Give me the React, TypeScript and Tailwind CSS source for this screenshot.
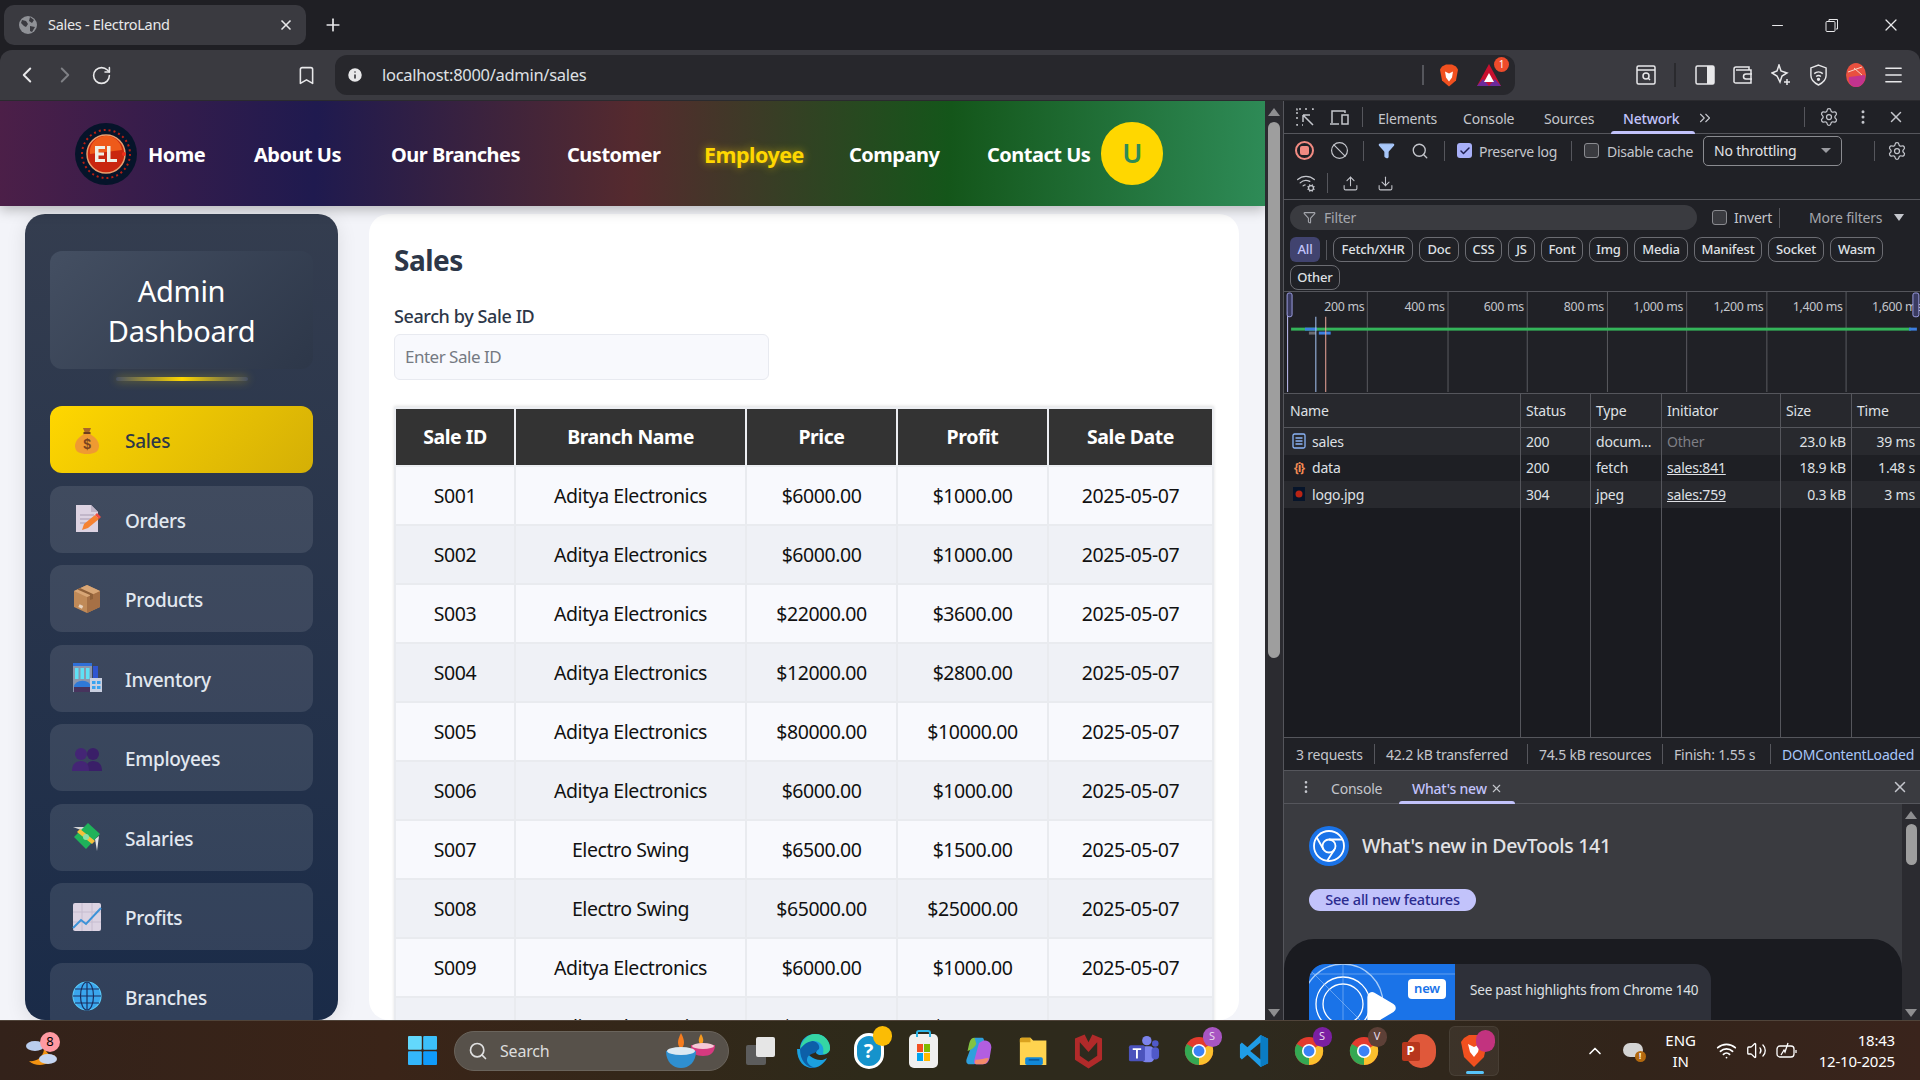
import React from "react";
import { ChevronLeft, ChevronRight, RotateCw, Bookmark, Info, X, Plus, Minus, Search, Settings, MoreVertical, ChevronsRight, Ban, Upload, Download, WifiCog, Filter, ChevronUp, Wifi, Volume2, Check, Menu, Play } from "lucide-react";

const ChromeIcon = ({ badge, color }: { badge: string; color: string }) => (
  <div className="relative w-[34px] h-[36px] flex items-center justify-center">
    <svg viewBox="0 0 32 32" className="w-[30px] h-[32px]">
      <circle cx="16" cy="16" r="15" fill="#e33b2e" />
      <path d="M16 16 L29 8.5 A15 15 0 0 1 16 31 Z" fill="#fbc02d" />
      <path d="M16 16 L16 31 A15 15 0 0 1 3 8.5 Z" fill="#34a853" />
      <circle cx="16" cy="16" r="7.5" fill="#fff" />
      <circle cx="16" cy="16" r="5.8" fill="#3b82f6" />
    </svg>
    <div className={`absolute -top-[6px] -right-[6px] w-[19px] h-[20px] rounded-full flex items-center justify-center text-[11px] ${color} text-[#e9dcef]`}>{badge}</div>
  </div>
);

const Logo = () => (
  <svg viewBox="0 0 62 62" className="w-[62px] h-[62px] shrink-0">
    <circle cx="31" cy="31" r="31" fill="#06142a" />
    <circle cx="31" cy="31" r="24" fill="none" stroke="#b81f12" strokeWidth="2" strokeDasharray="2 3" />
    <circle cx="31" cy="31" r="19" fill="#c9260f" stroke="#e8a070" strokeWidth="1.5" />
    <path d="M15 31a16 16 0 0 1 32 -4z" fill="#ee5a1a" />
    <path d="M20 23h10v3h-6.500v3.500H29v3h-5.500V36H30v3H20z M32 23h3.500v13H42v3H32z" fill="#eef0e6" />
    <circle cx="49" cy="31" r="2" fill="#f0301c" />
  </svg>
);

const Bag = () => (
  <svg viewBox="0 0 30 30" className="w-[30px] h-[30px]">
    <path d="M11 3h8l-2 5h-4z" fill="#a8662a" />
    <rect x="11.5" y="7" width="7" height="2.4" fill="#6d3f1c" />
    <path d="M12 9h6c5 3 9 7 9 12 0 6-5 8-12 8S3 27 3 21c0-5 4-9 9-12z" fill="#ef9a32" />
    <text x="15" y="24" textAnchor="middle" fontSize="14" fontWeight="700" fill="#7a4420" fontFamily="Liberation Sans">$</text>
  </svg>
);
const Doc = () => (
  <svg viewBox="0 0 30 30" className="w-[30px] h-[30px]">
    <path d="M4 1h15l7 7v20H4z" fill="#ddd3e2" />
    <path d="M19 1l7 7h-7z" fill="#c0b5c8" />
    <path d="M8 11h14M8 15h12M8 19h8" stroke="#a69bb0" strokeWidth="1" />
    <path d="M10 26l2-6 11-9 4 4-11 9z" fill="#f58232" />
    <path d="M23 11l2-2 4 4-2 2z" fill="#ef4e43" />
  </svg>
);
const Box = () => (
  <svg viewBox="0 0 30 30" className="w-[30px] h-[30px]">
    <path d="M15 1l13 6v16l-13 6-13-6V7z" fill="#c08a58" />
    <path d="M15 13l13-6v16l-13 6z" fill="#a67045" />
    <path d="M2 7l13 6 13-6-13-6z" fill="#d8a676" />
    <path d="M8 4l13 6v5l-3 1v-5L5.500 5.500z" fill="#8f6039" />
    <rect x="7" y="21" width="4" height="3" fill="#e8d4c0" transform="rotate(25 9 22)" />
  </svg>
);
const Building = () => (
  <svg viewBox="0 0 30 30" className="w-[30px] h-[30px]">
    <rect x="1" y="1" width="19" height="28" fill="#8c96ac" />
    <rect x="1" y="0" width="19" height="3" fill="#2f6fd8" />
    <rect x="3" y="5" width="3.500" height="11" fill="#5fe0f5" />
    <rect x="8.500" y="5" width="3.500" height="11" fill="#5fe0f5" />
    <rect x="14" y="5" width="3.500" height="11" fill="#5fe0f5" />
    <path d="M2 24a8 6 0 0 1 17 0z" fill="#2e79d8" />
    <rect x="2" y="24" width="17" height="5" fill="#47335d" />
    <rect x="21" y="3" width="5" height="13" fill="#2f55d0" />
    <rect x="18" y="15" width="12" height="14" fill="#c9cfe0" />
    <rect x="20" y="18" width="3.500" height="3" fill="#39a3f0" />
    <rect x="25" y="18" width="3.500" height="3" fill="#39a3f0" />
    <rect x="20" y="23" width="3.500" height="3" fill="#39a3f0" />
    <rect x="25" y="23" width="3.500" height="3" fill="#39a3f0" />
  </svg>
);
const Busts = () => (
  <svg viewBox="0 0 30 30" className="w-[30px] h-[30px]">
    <circle cx="21" cy="11" r="6" fill="#3a1f68" />
    <path d="M14 28c0-8 3-10 7-10s9 2 9 10z" fill="#3a1f68" />
    <circle cx="9" cy="11" r="6" fill="#442575" />
    <path d="M0 28c0-8 5-10 9-10s8 2 8 10z" fill="#442575" />
  </svg>
);
const Money = () => (
  <svg viewBox="0 0 30 30" className="w-[30px] h-[30px]">
    <path d="M1 5h13l3 6z" fill="#d4d6d8" />
    <path d="M25 29l-2-12 4-3z" fill="#e4e4e4" />
    <path d="M2 15L16 1l12 11-14 15z" fill="#1fb35a" />
    <path d="M8 7l15 12-3 3L5 10z" fill="#f5c13a" />
    <circle cx="14" cy="15" r="3" fill="#8ce0a8" />
  </svg>
);
const ChartIco = () => (
  <svg viewBox="0 0 30 30" className="w-[30px] h-[30px]">
    <rect x="1" y="1" width="28" height="28" rx="2" fill="#dcd3e2" />
    <path d="M1 10h28M1 20h28M10 1v28M20 1v28" stroke="#c6bccf" strokeWidth="1" />
    <path d="M1 26l8-8 5 4L29 6" stroke="#3d93d8" strokeWidth="2" fill="none" />
  </svg>
);
const GlobeIco = () => (
  <svg viewBox="0 0 30 30" className="w-[30px] h-[30px]" fill="none">
    <circle cx="15" cy="15" r="14" fill="#3aa6ee" />
    <g stroke="#1a2f60" strokeWidth="1.200">
      <circle cx="15" cy="15" r="14" stroke="#58c8f8" />
      <ellipse cx="15" cy="15" rx="6.500" ry="14" />
      <path d="M15 1v28M1 15h28M3 8h24M3 22h24" />
    </g>
  </svg>
);

const navItems = [
  { label: "Sales", icon: <Bag />, active: true },
  { label: "Orders", icon: <Doc /> },
  { label: "Products", icon: <Box /> },
  { label: "Inventory", icon: <Building /> },
  { label: "Employees", icon: <Busts /> },
  { label: "Salaries", icon: <Money /> },
  { label: "Profits", icon: <ChartIco /> },
  { label: "Branches", icon: <GlobeIco /> },
];

const rows = [
  ["S001", "Aditya Electronics", "$6000.00", "$1000.00", "2025-05-07"],
  ["S002", "Aditya Electronics", "$6000.00", "$1000.00", "2025-05-07"],
  ["S003", "Aditya Electronics", "$22000.00", "$3600.00", "2025-05-07"],
  ["S004", "Aditya Electronics", "$12000.00", "$2800.00", "2025-05-07"],
  ["S005", "Aditya Electronics", "$80000.00", "$10000.00", "2025-05-07"],
  ["S006", "Aditya Electronics", "$6000.00", "$1000.00", "2025-05-07"],
  ["S007", "Electro Swing", "$6500.00", "$1500.00", "2025-05-07"],
  ["S008", "Electro Swing", "$65000.00", "$25000.00", "2025-05-07"],
  ["S009", "Aditya Electronics", "$6000.00", "$1000.00", "2025-05-07"],
  ["S010", "Aditya Electronics", "$6000.00", "$1000.00", "2025-05-07"],
];

const chips = [
  ["Fetch/XHR", "w-[80px]"], ["Doc", "w-[40px]"], ["CSS", "w-[37px]"], ["JS", "w-[27px]"], ["Font", "w-[42px]"],
  ["Img", "w-[39px]"], ["Media", "w-[54px]"], ["Manifest", "w-[68px]"], ["Socket", "w-[56px]"], ["Wasm", "w-[53px]"],
];

const Sep = ({ cls = "mx-0" }: { cls?: string }) => <div className={`w-px h-[20px] bg-[#55565c] shrink-0 ${cls}`} />;
const Box14 = () => <div className="w-[15px] h-[15px] rounded-[3px] border border-[#8a8b90] bg-[#3a3b40] shrink-0" />;

const netRows = [
  { ic: <svg viewBox="0 0 14 16" className="w-[14px] h-[16px]" fill="none" stroke="#8ab4f8" strokeWidth="1.300"><rect x="1" y="1" width="12" height="14" rx="1.500" /><path d="M3.500 5h7M3.500 8h7M3.500 11h7" /></svg>, name: "sales", st: "200", ty: "docum...", ini: "Other", size: "23.0 kB", time: "39 ms", bg: "bg-[#28292e]" },
  { ic: <span className="text-[#f28b54] text-[12px] font-bold leading-none tracking-[-1px]">{"{i}"}</span>, name: "data", st: "200", ty: "fetch", ini: "sales:841", size: "18.9 kB", time: "1.48 s", bg: "bg-[#1e1f24]" },
  { ic: <svg viewBox="0 0 12 14" className="w-[12px] h-[14px]"><rect width="12" height="14" fill="#06142a" /><circle cx="6" cy="7" r="3.500" fill="#b82414" /></svg>, name: "logo.jpg", st: "304", ty: "jpeg", ini: "sales:759", size: "0.3 kB", time: "3 ms", bg: "bg-[#28292e]" },
];

const TaskSlot = ({ children }: { children: React.ReactNode }) => <div className="w-[55px] flex justify-center items-center shrink-0">{children}</div>;

export default function App() {
  return (
    <div className="w-[1920px] h-[1080px] flex flex-col overflow-hidden bg-[#202025] font-['Noto_Sans',sans-serif]">
      {/* tab strip */}
      <div className="h-[50px] shrink-0 flex items-center pl-[4px] bg-[#1f1f24] text-[#e8e8ea]">
        <div className="w-[302px] h-[40px] rounded-[10px] bg-[#3a3a40] flex items-center pl-[15px] pr-[12px]">
          <svg viewBox="0 0 18 18" className="w-[18px] h-[18px] shrink-0"><circle cx="9" cy="9" r="9" fill="#8f9196" /><path d="M3 4l4 1 2 3-2 3-2-1-3-3zM11 1l4 3-2 3-3-2zM11 10l5 1-3 5-2-1z" fill="#3a3a40" /></svg>
          <span className="ml-[11px] text-[14.500px] flex-1 tracking-[-0.3px]">Sales - ElectroLand</span>
          <X className="w-[16px] h-[16px]" strokeWidth={2.500} />
        </div>
        <Plus className="w-[20px] h-[20px] ml-[17px]" />
        <div className="flex-1" />
        <Minus className="w-[17px] h-[17px] mr-[39px]" strokeWidth={1.500} />
        <svg viewBox="0 0 14 14" className="w-[14px] h-[14px] mr-[42px]" fill="none" stroke="#e8e8ea"><rect x="1" y="3.500" width="9" height="10" rx="1" /><path d="M4 3V1.500h8.500V11H11" /></svg>
        <X className="w-[20px] h-[20px] mr-[19px]" strokeWidth={1.500} />
      </div>
      {/* toolbar */}
      <div className="h-[51px] shrink-0 bg-[#3a3a40] rounded-t-[12px] flex items-center text-[#e8e8ea] border-b border-[#2a2a2e]">
        <ChevronLeft className="w-[26px] h-[26px] ml-[14px]" strokeWidth={1.800} />
        <ChevronRight className="w-[26px] h-[26px] ml-[12px] text-[#7f8085]" strokeWidth={1.800} />
        <RotateCw className="w-[21px] h-[21px] ml-[13px]" strokeWidth={1.800} />
        <Bookmark className="w-[21px] h-[23px] ml-[184px]" strokeWidth={1.800} />
        <div className="ml-[18px] w-[1180px] h-[40px] rounded-[12px] bg-[#27272c] flex items-center pl-[11px]">
          <Info className="w-[18px] h-[18px] text-[#27272c] fill-[#e8e8ea]" strokeWidth={2} />
          <span className="ml-[18px] text-[16.500px] tracking-[-0.3px] text-[#dfe0e4]">localhost:8000/admin/sales</span>
          <div className="flex-1" />
          <div className="w-[2px] h-[20px] bg-[#55565c]" />
          <svg viewBox="0 0 20 24" className="w-[20px] h-[25px] ml-[15px]"><path d="M3 3l4-2h6l4 2 2 3-2 11-7 6-7-6L1 6z" fill="#f1501f" /><path d="M6 8l4 2 4-2-1 6-3 4-3-4z" fill="#fff" /></svg>
          <div className="relative ml-[18px]">
            <svg viewBox="0 0 24 22" className="w-[24px] h-[22px]"><path d="M12 0l12 22H0z" fill="#c8102e" /><path d="M12 22H0l6-7z" fill="#6b2a9b" /><path d="M24 22H12l6-7z" fill="#6b2a9b" /><path d="M12 9l5 9H7z" fill="#fff" /></svg>
            <div className="absolute -top-[7px] -right-[8px] w-[15px] h-[15px] rounded-full bg-[#ee4b2b] text-[10px] text-white flex items-center justify-center">1</div>
          </div>
          <div className="w-[14px]" />
        </div>
        <div className="w-[121px] shrink-0" />
        <svg viewBox="0 0 20 20" className="w-[20px] h-[20px] shrink-0" fill="none" stroke="#e8e8ea" strokeWidth="1.500"><rect x="1" y="1" width="18" height="18" rx="1.500" /><path d="M1 5h18" /><circle cx="10" cy="11" r="3" /><path d="M12 13l2 2" /></svg>
        <div className="w-[2px] h-[24px] bg-[#2a2a2e] ml-[18px] shrink-0" />
        <svg viewBox="0 0 20 20" className="w-[20px] h-[20px] ml-[19px] shrink-0"><rect x="1" y="1" width="18" height="18" rx="1.500" fill="none" stroke="#e8e8ea" strokeWidth="1.500" /><rect x="12" y="1" width="7" height="18" fill="#e8e8ea" /></svg>
        <svg viewBox="0 0 20 20" className="w-[20px] h-[20px] ml-[18px] shrink-0" fill="none" stroke="#e8e8ea" strokeWidth="1.500"><path d="M1 4a2 2 0 0 1 2-2h13v3M1 4v13a2 2 0 0 0 2 1h15V5H3" /><path d="M19 9h-6a2 2 0 0 0 0 5h6" /></svg>
        <svg viewBox="0 0 20 22" className="w-[20px] h-[22px] ml-[18px] shrink-0" fill="none" stroke="#e8e8ea" strokeWidth="1.500"><path d="M8 1l2 6 6 2-5 3-2 6-3-6-5-3 5-2z" /><path d="M16 15v6M13 18h6" /></svg>
        <svg viewBox="0 0 20 24" className="w-[19px] h-[23px] ml-[18px] shrink-0" fill="none" stroke="#e8e8ea" strokeWidth="1.500"><path d="M10 1l8 3v8c0 5-4 8-8 10-4-2-8-5-8-10V4z" /><path d="M5.500 10a7 7 0 0 1 9 0M7.500 13a4 4 0 0 1 5 0" /><circle cx="10" cy="16" r="1" fill="#e8e8ea" /></svg>
        <svg viewBox="0 0 20 24" className="w-[20px] h-[24px] ml-[18px] shrink-0"><ellipse cx="10" cy="12" rx="10" ry="12" fill="#e8503f" /><path d="M10 24C4 24 2 18 3 14l16-2c1 6-3 12-9 12z" fill="#c2338f" /><path d="M2 9l14-5M8 5l8 7" stroke="#f5d5c8" strokeWidth="1" /></svg>
        <Menu className="w-[23px] h-[26px] ml-[16px] shrink-0" strokeWidth={1.500} />
      </div>
      {/* middle */}
      <div className="flex-1 min-h-0 flex">
        {/* page */}
        <div className="w-[1265px] shrink-0 flex flex-col bg-[#f3f4f9] overflow-hidden">
          <header className="h-[105px] shrink-0 flex items-center pl-[75px] shadow-[0_4px_12px_rgba(0,0,0,0.25)] z-10 bg-[linear-gradient(92deg,#4c1f48,#1f1a4f_25%,#552a2e_50%,#14561a_75%,#2e8b57)] text-white font-bold text-[20px] tracking-[-0.5px]">
            <Logo />
            <div className="ml-[11px] mt-[3px] flex items-center">
              <span className="w-[106px]">Home</span>
              <span className="w-[137px]">About Us</span>
              <span className="w-[176px]">Our Branches</span>
              <span className="w-[137px]">Customer</span>
              <span className="w-[145px] text-[#ffd700] text-[21.500px] [text-shadow:0_0_8px_rgba(255,215,0,0.6)]">Employee</span>
              <span className="w-[138px]">Company</span>
              <span className="w-[114px]">Contact Us</span>
            </div>
            <div className="w-[62px] h-[63px] rounded-full bg-[#ffd700] text-[#2e8b57] text-[27px] flex items-center justify-center font-semibold">U</div>
          </header>
          <div className="flex-1 min-h-0 flex pl-[25px] pr-[26px] pt-[8px] gap-[31px]">
            <aside className="w-[313px] shrink-0 rounded-[20px] overflow-hidden bg-[linear-gradient(180deg,#343d4f,#1a2b48)] px-[25px] pt-[37px] shadow-[0_4px_20px_rgba(0,0,0,0.1)]">
              <div className="h-[118px] pt-[2px] rounded-[12px] bg-[linear-gradient(135deg,#444f62,#2d3749)] flex items-center justify-center text-center text-white text-[29px] leading-[40px] tracking-[-0.3px] px-[40px]">Admin Dashboard</div>
              <div className="mx-auto mt-[8px] w-[132px] h-[4px] rounded-full bg-[linear-gradient(90deg,#475063,#ffd700,#475063)] shadow-[0_0_10px_rgba(255,215,0,0.4)]" />
              <div className="mt-[25px] flex flex-col gap-[12.500px]">
                {navItems.map((n) => (
                  <div key={n.label} className={n.active
                    ? "h-[67px] shrink-0 rounded-[12px] flex items-center pl-[22px] text-[#2d3748] font-medium text-[19px] tracking-[-0.3px] bg-[linear-gradient(135deg,#ffd700,#d4af06)]"
                    : "h-[67px] shrink-0 rounded-[12px] flex items-center pl-[22px] text-[#e2e8f0] font-medium text-[19px] tracking-[-0.3px] bg-[rgba(255,255,255,0.1)]"}>
                    {n.icon}
                    <span className="ml-[23px] mt-[4px]">{n.label}</span>
                  </div>
                ))}
              </div>
            </aside>
            <main className="flex-1 min-w-0 rounded-[20px] overflow-hidden bg-white pl-[25px] pr-[25px] pt-[27px]">
              <h1 className="text-[28px] leading-[38px] font-bold text-[#2d3748] tracking-[-0.5px]">Sales</h1>
              <label className="block mt-[25px] text-[18px] leading-[24px] font-medium text-[#2d3748] tracking-[-0.4px]">Search by Sale ID</label>
              <div className="mt-[6px] w-[375px] h-[46px] rounded-[6px] bg-[#f8f9fd] border border-[#e8eaf0] flex items-center pl-[10px] text-[17px] text-[#757a82] tracking-[-0.5px]">Enter Sale ID</div>
              <table className="mt-[27px] w-[818px] table-fixed border-collapse text-[19.500px] tracking-[-0.45px] shadow-[0_-1px_3px_rgba(0,0,0,0.12)]">
                <thead>
                  <tr className="h-[58px] bg-[#333333] text-white">
                    <th className="w-[120px] border-2 border-[#eceef2] font-bold">Sale ID</th>
                    <th className="w-[231px] border-2 border-[#eceef2] font-bold">Branch Name</th>
                    <th className="w-[151px] border-2 border-[#eceef2] font-bold">Price</th>
                    <th className="w-[151px] border-2 border-[#eceef2] font-bold">Profit</th>
                    <th className="w-[165px] border-2 border-[#eceef2] font-bold">Sale Date</th>
                  </tr>
                </thead>
                <tbody>
                  {rows.map((r, i) => (
                    <tr key={r[0]} className={i % 2 === 0 ? "h-[59px] bg-[#f8f9fd] text-[#111]" : "h-[59px] bg-[#eff1f6] text-[#111]"}>
                      {r.map((c, j) => (
                        <td key={j} className="border-2 border-[#e9ebef] text-center">{c}</td>
                      ))}
                    </tr>
                  ))}
                </tbody>
              </table>
            </main>
          </div>
        </div>
        {/* page scrollbar */}
        <div className="w-[18px] shrink-0 bg-[#2b2b30] flex flex-col items-center pt-[7px] pb-[3px]">
          <div className="w-0 h-0 border-l-[6px] border-r-[6px] border-b-[8px] border-l-transparent border-r-transparent border-b-[#8e8e90]" />
          <div className="w-[12px] h-[536px] mt-[6px] rounded-full bg-[#9e9e9e]" />
          <div className="flex-1" />
          <div className="w-0 h-0 border-l-[6px] border-r-[6px] border-t-[8px] border-l-transparent border-r-transparent border-t-[#8e8e90]" />
        </div>
        {/* devtools */}
        <div className="flex-1 min-w-0 border-l border-[#55565c] bg-[#202126] text-[#c4c6cc] flex flex-col text-[14px] tracking-[-0.2px]">
          <div className="h-[33px] shrink-0 flex items-center border-b border-[#55565c] relative">
            <svg viewBox="0 0 18 18" className="w-[18px] h-[18px] ml-[12px]" fill="none" stroke="#c4c6cc" strokeWidth="1.500"><path d="M1 6V1h5M9 1h3M1 9v3M1 16v1h2M6 17h1M16 1h1v2" strokeDasharray="2 1.500" /><path d="M7 7h7M7 7v7M7 7l10 10" /></svg>
            <svg viewBox="0 0 20 16" className="w-[20px] h-[16px] ml-[15px]" fill="none" stroke="#c4c6cc" strokeWidth="1.500"><path d="M1 15h9M3 14V2h13v2" /><rect x="13" y="6" width="6" height="9" /></svg>
            <Sep cls="ml-[13px]" />
            <span className="ml-[15px] w-[85px] mt-[3px]">Elements</span>
            <span className="w-[81px] mt-[3px]">Console</span>
            <span className="w-[79px] mt-[3px]">Sources</span>
            <span className="w-[70px] mt-[3px] text-[#c2c3fb] font-medium">Network</span>
            <ChevronsRight className="w-[18px] h-[18px] mt-[1px] ml-[3px]" strokeWidth={1.500} />
            <div className="absolute left-[327px] bottom-[-1px] w-[84px] h-[3px] rounded-t-[3px] bg-[#c2c3fb]" />
            <div className="flex-1" />
            <Sep />
            <Settings className="w-[20px] h-[20px] ml-[14px]" strokeWidth={1.500} />
            <MoreVertical className="w-[18px] h-[18px] ml-[15px]" />
            <X className="w-[18px] h-[18px] ml-[15px] mr-[15px]" strokeWidth={2} />
          </div>
          <div className="h-[33px] shrink-0 flex items-center">
            <div className="ml-[11px] w-[19px] h-[19px] rounded-full border-2 border-[#f28b82] flex items-center justify-center"><div className="w-[9px] h-[9px] rounded-[2px] bg-[#f28b82]" /></div>
            <Ban className="w-[19px] h-[19px] ml-[16px]" strokeWidth={1.500} />
            <Sep cls="ml-[14px]" />
            <Filter className="w-[17px] h-[17px] ml-[14px] text-[#a8c7fa] fill-[#a8c7fa]" />
            <Search className="w-[18px] h-[18px] ml-[16px]" strokeWidth={1.800} />
            <Sep cls="ml-[15px]" />
            <div className="ml-[12px] w-[15px] h-[15px] rounded-[3px] bg-[#a8b0f8] flex items-center justify-center"><Check className="w-[12px] h-[12px] text-[#1e1f50]" strokeWidth={3} /></div>
            <span className="ml-[7px] w-[92px] text-[14px] mt-[1px] whitespace-nowrap tracking-[-0.3px]">Preserve log</span>
            <Sep />
            <div className="ml-[12px]"><Box14 /></div>
            <span className="ml-[8px] w-[96px] text-[14px] mt-[1px] whitespace-nowrap tracking-[-0.3px]">Disable cache</span>
            <div className="w-[139px] h-[30px] rounded-[5px] border border-[#8a8b90] flex items-center justify-between pl-[10px] pr-[10px] text-[14px] text-[#e3e3e6]">
              <span>No throttling</span>
              <div className="w-0 h-0 border-l-[5px] border-r-[5px] border-t-[5px] border-l-transparent border-r-transparent border-t-[#9a9ba0]" />
            </div>
            <div className="flex-1" />
            <Sep />
            <Settings className="w-[20px] h-[20px] ml-[12px] mr-[13px]" strokeWidth={1.500} />
          </div>
          <div className="h-[33px] shrink-0 flex items-center border-b border-[#55565c]">
            <WifiCog className="w-[20px] h-[20px] ml-[12px]" strokeWidth={1.500} />
            <Sep cls="ml-[11px]" />
            <Upload className="w-[17px] h-[17px] ml-[14px]" strokeWidth={1.500} />
            <Download className="w-[17px] h-[17px] ml-[18px]" strokeWidth={1.500} />
          </div>
          <div className="h-[92px] shrink-0 border-b border-[#55565c] px-[6px] pt-[5px]">
            <div className="flex items-center">
              <div className="w-[407px] h-[25px] rounded-full bg-[#3a3b40] flex items-center pl-[13px] text-[#a5a7ad]"><Filter className="w-[13px] h-[13px]" /><span className="ml-[8px] text-[14px]">Filter</span></div>
              <div className="ml-[15px]"><Box14 /></div>
              <span className="ml-[7px] text-[14px] w-[45px]">Invert</span>
              <Sep />
              <span className="ml-[29px] text-[14px] w-[85px] whitespace-nowrap text-[#a5a7ad]">More filters</span>
              <div className="w-0 h-0 border-l-[5px] border-r-[5px] border-t-[7px] border-l-transparent border-r-transparent border-t-[#c4c6cc]" />
            </div>
            <div className="mt-[7px] flex flex-wrap items-center gap-x-[6px] gap-y-[3px] w-[610px] text-[13px] font-medium text-[#dfe0e4]">
              <div className="w-[30px] h-[25px] rounded-[6px] bg-[#41436f] text-[#c2c3fb] flex items-center justify-center">All</div>
              <div className="w-px h-[20px] bg-[#55565c]" />
              {chips.map(([c, w]) => (
                <div key={c} className={`${w} h-[25px] rounded-[8px] border border-[#6b6c72] flex items-center justify-center whitespace-nowrap`}>{c}</div>
              ))}
              <div className="w-[50px] h-[25px] rounded-[8px] border border-[#6b6c72] flex items-center justify-center">Other</div>
            </div>
          </div>
          <svg viewBox="0 0 636 102" className="w-[636px] h-[102px] shrink-0 border-b border-[#55565c]">
            <g stroke="#5a5b60">
              {[81, 162.5, 242.5, 323.5, 403.5, 484.5, 564.5].map((x) => <line key={x} x1={x} y1="0" x2={x} y2="101" />)}
            </g>
            <g fill="#c4c6cc" fontSize="12.500" fontFamily="Noto Sans" textAnchor="end" letterSpacing="-0.3">
              <text x="78" y="19">200 ms</text><text x="159" y="19">400 ms</text><text x="239" y="19">600 ms</text>
              <text x="320" y="19">800 ms</text><text x="400" y="19">1,000 ms</text><text x="481" y="19">1,200 ms</text>
              <text x="561" y="19">1,400 ms</text><text x="641" y="19">1,600 ms</text>
            </g>
            <rect x="4" y="36" width="626" height="3" fill="#34b45a" />
            <rect x="18" y="36" width="12" height="3" fill="#3d7fe0" />
            <rect x="628" y="36" width="8" height="3" fill="#3d7fe0" />
            <rect x="22" y="40" width="7" height="3" fill="#6a6b70" />
            <rect x="32" y="40" width="12" height="3" fill="#3d7fe0" />
            <line x1="29" y1="25" x2="29" y2="101" stroke="#a8c7fa" />
            <line x1="39" y1="25" x2="39" y2="101" stroke="#f2a89c" />
            <line x1="0.500" y1="20" x2="0.500" y2="101" stroke="#c2c3fb" />
            <rect x="0" y="1" width="5" height="24" rx="2" fill="#3a3b60" stroke="#9a9ce0" />
            <rect x="632" y="1" width="6" height="24" rx="2" fill="#3a3b60" stroke="#9a9ce0" />
          </svg>
          <div className="flex-1 min-h-0 bg-[#1a1b20] flex flex-col">
            <div className="grid grid-cols-[236px_70px_71px_119px_71px_1fr] h-[34px] shrink-0 bg-[#27282d] border-b border-[#55565c] text-[#dfe0e4] text-[14px]">
              <div className="pl-[6px] flex items-center">Name</div>
              <div className="pl-[5px] flex items-center border-l border-[#55565c]">Status</div>
              <div className="pl-[5px] flex items-center border-l border-[#55565c]">Type</div>
              <div className="pl-[5px] flex items-center border-l border-[#55565c]">Initiator</div>
              <div className="pl-[5px] flex items-center border-l border-[#55565c]">Size</div>
              <div className="pl-[5px] flex items-center border-l border-[#55565c]">Time</div>
            </div>
            {netRows.map((r) => (
              <div key={r.name} className={`grid grid-cols-[236px_70px_71px_119px_71px_1fr] h-[26.500px] shrink-0 text-[14px] text-[#dfe0e4] ${r.bg}`}>
                <div className="pl-[7px] flex items-center"><div className="w-[16px] flex justify-center">{r.ic}</div><span className="ml-[5px]">{r.name}</span></div>
                <div className="pl-[5px] flex items-center border-l border-[#55565c]">{r.st}</div>
                <div className="pl-[5px] flex items-center border-l border-[#55565c] whitespace-nowrap overflow-hidden">{r.ty}</div>
                <div className={r.ini === "Other" ? "pl-[5px] flex items-center border-l border-[#55565c] text-[#7e7f85]" : "pl-[5px] flex items-center border-l border-[#55565c] underline"}>{r.ini}</div>
                <div className="pr-[5px] flex items-center justify-end border-l border-[#55565c]">{r.size}</div>
                <div className="pr-[5px] flex items-center justify-end border-l border-[#55565c]">{r.time}</div>
              </div>
            ))}
            <div className="flex-1 grid grid-cols-[236px_70px_71px_119px_71px_1fr]">
              <div /><div className="border-l border-[#55565c]" /><div className="border-l border-[#55565c]" /><div className="border-l border-[#55565c]" /><div className="border-l border-[#55565c]" /><div className="border-l border-[#55565c]" />
            </div>
          </div>
          <div className="h-[34px] shrink-0 flex items-center border-y border-[#55565c] bg-[#202126] pl-[12px] text-[14px] whitespace-nowrap overflow-hidden">
            <span className="w-[78px]">3 requests</span><Sep />
            <span className="ml-[11px] w-[141px]">42.2 kB transferred</span><Sep />
            <span className="ml-[11px] w-[123px]">74.5 kB resources</span><Sep />
            <span className="ml-[11px] w-[96px]">Finish: 1.55 s</span><Sep />
            <span className="ml-[11px] text-[#a8c7fa]">DOMContentLoaded</span>
          </div>
          <div className="h-[33px] shrink-0 flex items-center border-b border-[#55565c] bg-[#3a3b40] relative">
            <MoreVertical className="w-[16px] h-[16px] ml-[14px]" />
            <span className="ml-[17px] w-[81px] text-[14px] mt-[3px]">Console</span>
            <span className="text-[14px] font-medium text-[#c2c3fb] mt-[3px] whitespace-nowrap">What's new</span>
            <X className="w-[13px] h-[13px] ml-[3px] mt-[2px] text-[#c4c6cc]" />
            <div className="absolute left-[115px] bottom-[-1px] w-[116px] h-[3px] rounded-t-[3px] bg-[#c2c3fb]" />
            <div className="flex-1" />
            <X className="w-[18px] h-[18px] mr-[11px]" strokeWidth={2} />
          </div>
          <div className="h-[216px] shrink-0 bg-[#3a3b40] flex overflow-hidden">
            <div className="flex-1 min-w-0 flex flex-col">
              <div className="flex items-center pl-[25px] pt-[22px]">
                <svg viewBox="0 0 40 40" className="w-[40px] h-[40px] shrink-0" fill="none"><circle cx="20" cy="20" r="20" fill="#1a73e8" /><circle cx="20" cy="20" r="15" stroke="#fff" strokeWidth="1.800" /><circle cx="20" cy="20" r="6.500" stroke="#fff" strokeWidth="1.800" /><path d="M20 13.500h14M14.500 23.500L7.500 11M25.500 23.500L18 35" stroke="#fff" strokeWidth="1.800" /></svg>
                <span className="ml-[13px] text-[19.500px] font-medium text-[#e3e3e6] tracking-[-0.3px]">What's new in DevTools 141</span>
              </div>
              <div className="ml-[25px] mt-[23px] w-[167px] h-[30px] rounded-full bg-[#c2c3fb] flex items-center justify-center text-[14.500px] font-medium text-[#2b2b8f]">See all new features</div>
              <div className="mt-[28px] flex-1 rounded-t-[30px] bg-[#1a1b20] pl-[25px] pt-[25px]">
                <div className="w-[402px] h-[60px] rounded-t-[16px] bg-[#2e3039] overflow-hidden flex">
                  <div className="relative w-[146px] h-[60px] shrink-0 overflow-hidden rounded-tl-[16px] bg-[#1a73e8]">
                    <svg viewBox="0 0 146 60" className="w-[146px] h-[60px]" fill="none" stroke="#a8ccf8" strokeWidth="1.300"><circle cx="34" cy="40" r="27" stroke="#fff" /><circle cx="34" cy="40" r="20" stroke="#fff" /><circle cx="34" cy="40" r="40" /><path d="M0 10h146M34 0v60M0 5l60 60" strokeWidth="0.500" /></svg>
                    <Play className="absolute left-[52px] top-[22px] w-[38px] h-[44px] text-white fill-white" />
                    <div className="absolute left-[99px] top-[15px] w-[38px] h-[20px] rounded-[4px] bg-white text-[#1a73e8] text-[13px] font-semibold flex items-center justify-center">new</div>
                  </div>
                  <span className="ml-[15px] mt-[16px] text-[13.500px] text-[#dfe0e4] whitespace-nowrap">See past highlights from Chrome 140</span>
                </div>
              </div>
            </div>
            <div className="w-[18px] shrink-0 bg-[#2b2b30] flex flex-col items-center pt-[7px]">
              <div className="w-0 h-0 border-l-[6px] border-r-[6px] border-b-[8px] border-l-transparent border-r-transparent border-b-[#8e8e90]" />
              <div className="w-[11px] h-[41px] mt-[5px] rounded-full bg-[#9e9e9e]" />
              <div className="flex-1" />
              <div className="w-0 h-0 border-l-[6px] border-r-[6px] border-t-[8px] border-l-transparent border-r-transparent border-t-[#8e8e90] mb-[3px]" />
            </div>
          </div>
        </div>
      </div>
      {/* taskbar */}
      <div className="h-[60px] shrink-0 flex items-center border-t border-[#50443a] text-white bg-[linear-gradient(90deg,#33221a,#3a2418_20%,#2e2a1a_45%,#2e2a1e_65%,#32241a_85%,#3a241c)]">
        <div className="relative ml-[26px] w-[34px] h-[32px] shrink-0">
          <svg viewBox="0 0 34 32" className="w-[34px] h-[32px]"><path d="M18 12A13 13 0 0 1 3 26c6 6 22 6 26-6-2 2-8 0-11-8z" fill="#f39312" /><ellipse cx="9" cy="11" rx="9" ry="5" fill="#b9cdee" /><ellipse cx="22" cy="24" rx="9" ry="5" fill="#c5d6f2" /></svg>
          <div className="absolute -top-[3px] left-[14px] w-[20px] h-[20px] rounded-full bg-[#ff9aa2] text-black text-[13px] flex items-center justify-center">8</div>
        </div>
        <svg viewBox="0 0 29 29" className="w-[29px] h-[29px] ml-[348px] shrink-0"><rect width="13.800" height="13.800" rx="1" fill="#63d8fc" /><rect x="15.200" width="13.800" height="13.800" rx="1" fill="#3cc0fa" /><rect y="15.200" width="13.800" height="13.800" rx="1" fill="#34b6fb" /><rect x="15.200" y="15.200" width="13.800" height="13.800" rx="1" fill="#109bfa" /></svg>
        <div className="ml-[17px] w-[275px] h-[40px] rounded-full bg-[#57514a] border border-[#6a645c] flex items-center pl-[13px] shrink-0">
          <Search className="w-[20px] h-[20px] text-[#e0e0e0]" strokeWidth={2} />
          <span className="ml-[12px] text-[16px] text-[#dddddd] tracking-[-0.2px]">Search</span>
          <div className="flex-1" />
          <svg viewBox="0 0 52 40" className="w-[52px] h-[40px] mr-[11px]"><path d="M36 3c3 5 3 8 0 11-3-3-3-6 0-11z" fill="#f59a1f" /><path d="M26 14h24c0 8-5 11-12 11s-12-3-12-11z" fill="#d6397f" /><ellipse cx="38" cy="15" rx="11" ry="3" fill="#f4c9d6" /><path d="M16 2c4 8 4 12 0 16-4-4-4-8 0-16z" fill="#f57c1f" /><path d="M1 20h30c0 11-7 17-15 17S1 31 1 20z" fill="#2f8fd0" /><ellipse cx="16" cy="20" rx="14" ry="4" fill="#dce9f2" /></svg>
        </div>
        <svg viewBox="0 0 30 30" className="w-[30px] h-[30px] ml-[17px] shrink-0"><rect x="0" y="9" width="20" height="20" rx="2" fill="#5c5c5c" /><rect x="10" y="1" width="19" height="20" rx="2" fill="#e6e6e6" /></svg>
        <div className="ml-[10px] flex shrink-0 items-center">
          <TaskSlot><svg viewBox="0 0 34 36" className="w-[34px] h-[36px]"><path d="M3 16C3 6 11 1 18 1c10 0 15 8 15 14 0 4-3 7-9 7-4 0-5-2-5-3s2-2 2-5-4-6-8-4-6 8 0 13 13 5 17 2c-3 6-9 10-15 10-7 0-15-6-15-19z" fill="#1ba0e0" /><path d="M3 16c2-7 8-9 13-8s7 5 6 8c-2 1-3 3-3 3-3 2-8 2-9 7s6 9 10 9c-10 1-17-7-17-19z" fill="#0d5fa8" /><path d="M18 1c10 0 15 8 15 14 0 4-3 6-7 6 2-8-3-13-9-13-5 0-9 2-14 8 2-9 8-15 15-15z" fill="#35d6a4" /></svg></TaskSlot>
          <TaskSlot><div className="relative w-[34px] h-[36px] flex items-center justify-center">
            <div className="w-[30px] h-[36px] rounded-full bg-[#1593cc] border-[3px] border-white flex items-center justify-center text-white text-[20px] font-bold">?</div>
            <div className="absolute -top-[7px] right-[-6px] w-[19px] h-[20px] rounded-full bg-[#fbbc05]" />
          </div></TaskSlot>
          <TaskSlot><div className="relative w-[29px] h-[34px] rounded-[5px] bg-[#f0f0f0] flex items-center justify-center">
            <div className="absolute -top-[4px] left-[7px] w-[15px] h-[7px] border-2 border-b-0 border-[#2bb5e8] rounded-t-[3px]" />
            <div className="grid grid-cols-2 gap-[1px] mt-[4px]"><div className="w-[6px] h-[8px] bg-[#f25022]" /><div className="w-[6px] h-[8px] bg-[#7fba00]" /><div className="w-[6px] h-[8px] bg-[#00a4ef]" /><div className="w-[6px] h-[8px] bg-[#ffb900]" /></div>
          </div></TaskSlot>
          <TaskSlot><svg viewBox="0 0 34 34" className="w-[30px] h-[34px]"><path d="M12 2h8c3 0 3 3 2 6l-5 20c-1 3-3 4-6 4H6c-3 0-4-3-3-6z" fill="#2f9fdc" /><path d="M12 2c-3 0-5 2-6 6L4 17c4-1 8-4 10-8z" fill="#83c341" /><path d="M22 5c5 0 9 2 9 8l-2 12c-1 4-3 7-7 7h-8c-3 0-3-3-2-6l5-18z" fill="#b25ee0" /><path d="M28 25c-1 4-3 7-7 7h-7c-2 0-2-2-1-5 6 0 10-2 15-2z" fill="#f58b6b" /></svg></TaskSlot>
          <TaskSlot><svg viewBox="0 0 34 36" className="w-[30px] h-[36px]"><path d="M1 5a2 2 0 0 1 2-2h10l3 3h15v28H1z" fill="#ffd34f" /><path d="M1 5a2 2 0 0 1 2-2h10v5H1z" fill="#d9a21f" /><rect x="7" y="25" width="20" height="9" rx="2" fill="#1188d8" /><rect x="11" y="27" width="12" height="2" fill="#0a5ea0" /></svg></TaskSlot>
          <TaskSlot><svg viewBox="0 0 30 36" className="w-[29px] h-[36px]"><path d="M1 5l10-4 4 8 4-8 10 4v22l-14 9-14-9z" fill="#b12a2a" /><path d="M6 9l9 10 9-10v14l-9 6-9-6z" fill="#2e2a1e" /></svg></TaskSlot>
          <TaskSlot><svg viewBox="0 0 34 34" className="w-[32px] h-[34px]"><circle cx="20" cy="6" r="5" fill="#7b83eb" /><circle cx="29" cy="9" r="3.500" fill="#5059c9" /><rect x="14" y="12" width="14" height="17" rx="5" fill="#7b83eb" /><rect x="25" y="13" width="8" height="13" rx="4" fill="#5059c9" /><rect x="1" y="11" width="17" height="17" rx="2" fill="#4b53bc" /><path d="M5 14h9v2h-3.500v9h-2v-9H5z" fill="#fff" /></svg></TaskSlot>
          <TaskSlot><ChromeIcon badge="S" color="bg-[#a855c2]" /></TaskSlot>
          <TaskSlot><svg viewBox="0 0 32 36" className="w-[30px] h-[36px]"><path d="M23 1l8 4v26l-8 4-14-13-6 5-2-2v-14l2-2 6 5z" fill="#1f9ce6" /><path d="M23 9L12 18l11 9z" fill="#2e2a1e" /><path d="M23 1l8 4v26l-8 4z" fill="#0a7cc4" /></svg></TaskSlot>
          <TaskSlot><ChromeIcon badge="S" color="bg-[#7b1fa2]" /></TaskSlot>
          <TaskSlot><ChromeIcon badge="V" color="bg-[#5d4037]" /></TaskSlot>
          <TaskSlot><div className="relative w-[34px] h-[34px]">
            <div className="absolute left-[4px] top-0 w-[30px] h-[34px] rounded-full bg-[#e0583a]" />
            <div className="absolute left-0 top-[8px] w-[18px] h-[19px] rounded-[2px] bg-[#b7361c] flex items-center justify-center text-white text-[13px] font-bold">P</div>
          </div></TaskSlot>
          <TaskSlot><div className="relative w-[50px] h-[50px] rounded-[6px] bg-[rgba(255,255,255,0.06)] border border-[rgba(255,255,255,0.06)] flex items-center justify-center">
            <svg viewBox="0 0 28 34" className="w-[28px] h-[34px]"><path d="M4 4l5-3h10l5 3 3 4-3 15-10 10L4 23 1 8z" fill="#f1501f" /><path d="M8 10l6 3 6-3-2 8-4 5-4-5z" fill="#fff" /></svg>
            <div className="absolute top-[3px] right-[3px] w-[19px] h-[22px] rounded-full bg-[#c2337f]" />
            <div className="absolute bottom-[1px] left-[16px] w-[18px] h-[3px] rounded-full bg-[#58c4f8]" />
          </div></TaskSlot>
        </div>
        <div className="flex-1" />
        <ChevronUp className="w-[20px] h-[20px] mr-[18px] shrink-0" strokeWidth={2} />
        <div className="relative w-[20px] h-[16px] mr-[22px] shrink-0">
          <div className="w-[20px] h-[14px] rounded-full bg-[#d4d4d4]" />
          <div className="absolute -bottom-[3px] -right-[3px] w-[11px] h-[11px] rounded-full bg-[#b3690e] text-white text-[8px] font-bold flex items-center justify-center">!</div>
        </div>
        <div className="w-[32px] text-[15px] leading-[21px] text-center mr-[19px] shrink-0">ENG<br />IN</div>
        <Wifi className="w-[21px] h-[21px] mr-[9px] shrink-0" strokeWidth={2} />
        <Volume2 className="w-[21px] h-[21px] mr-[9px] shrink-0" strokeWidth={1.500} />
        <svg viewBox="0 0 22 18" className="w-[22px] h-[18px] mr-[21px] shrink-0" fill="none" stroke="#fff" strokeWidth="1.300"><rect x="1" y="4" width="17" height="11" rx="3" /><path d="M20 8v3" /><path d="M5 13l3-5 1 2 3-9" /></svg>
        <div className="text-right text-[15px] leading-[21px] mr-[25px] shrink-0 tracking-[-0.2px]">18:43<br />12-10-2025</div>
      </div>
    </div>
  );
}
